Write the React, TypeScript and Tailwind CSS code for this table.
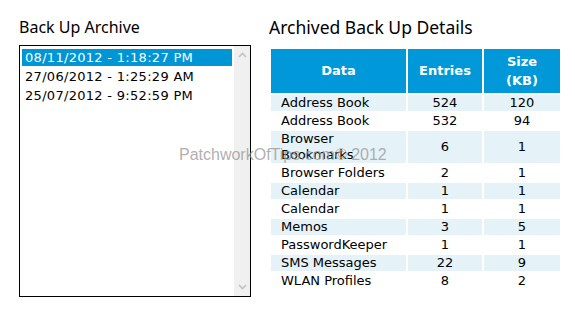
import { useState } from 'react';

const archives = [
  "08/11/2012 - 1:18:27 PM",
  "27/06/2012 - 1:25:29 AM",
  "25/07/2012 - 9:52:59 PM",
];

const details: [string, number, number][] = [
  ["Address Book", 524, 120],
  ["Address Book", 532, 94],
  ["Browser Bookmarks", 6, 1],
  ["Browser Folders", 2, 1],
  ["Calendar", 1, 1],
  ["Calendar", 1, 1],
  ["Memos", 3, 5],
  ["PasswordKeeper", 1, 1],
  ["SMS Messages", 22, 9],
  ["WLAN Profiles", 8, 2],
];

const body = { fontFamily: '"DejaVu Sans", Verdana, sans-serif' };
const heading = { fontFamily: '"Noto Sans", "Open Sans", sans-serif' };

export default function App() {
  const [selected, setSelected] = useState(0);

  return (
    <div className="relative w-[575px] h-[313px] bg-white text-black flex pt-[16px]">
      {/* Left: archive list */}
      <div className="ml-[19px] w-[232px]">
        <h2 className="text-[16px] leading-[22px] h-[29px]" style={heading}>
          Back Up Archive
        </h2>
        <div className="flex h-[252px] border border-black">
          <ul className="flex-1 pt-[3px] pl-[2px] pr-[2px] text-[13px] tracking-[0.3px]" style={body}>
            {archives.map((a, i) => (
              <li
                key={a}
                onClick={() => setSelected(i)}
                className={
                  'pl-[3px] h-[17px] leading-[17px] mb-[2px] cursor-default ' +
                  (i === selected ? 'bg-[#0096d6] text-white' : '')
                }
              >
                {a}
              </li>
            ))}
          </ul>
          <div className="w-[16px] bg-[#f0f0f0] flex flex-col items-center justify-between py-[6px]">
            <svg width="9" height="6" viewBox="0 0 9 6">
              <path d="M1 5 L4.5 1.5 L8 5" fill="none" stroke="#c2c2c2" strokeWidth="1.6" />
            </svg>
            <svg width="9" height="6" viewBox="0 0 9 6">
              <path d="M1 1 L4.5 4.5 L8 1" fill="none" stroke="#c2c2c2" strokeWidth="1.6" />
            </svg>
          </div>
        </div>
      </div>

      {/* Right: details table */}
      <div className="ml-[18px]">
        <h2 className="text-[17.5px] leading-[22px] h-[31px]" style={heading}>
          Archived Back Up Details
        </h2>
        <table className="border-separate border-spacing-[2px] text-[13px] leading-[16px]" style={body}>
          <thead>
            <tr className="bg-[#0098d8] text-white font-bold">
              <th className="w-[135px] h-[44px] px-[4px]">Data</th>
              <th className="w-[74px] px-[4px]">Entries</th>
              <th className="w-[76px] px-[8px] leading-[19px]">Size (KB)</th>
            </tr>
          </thead>
          <tbody>
            {details.map(([name, entries, size], i) => (
              <tr key={i} className={i % 2 === 0 ? 'bg-[#e5f2f8]' : ''}>
                <td className="pl-[10px] pr-[4px] w-[135px] align-middle">
                  {name === 'Browser Bookmarks' ? (
                    <>
                      Browser
                      <br />
                      Bookmarks
                    </>
                  ) : (
                    name
                  )}
                </td>
                <td className="text-center">{entries}</td>
                <td className="text-center">{size}</td>
              </tr>
            ))}
          </tbody>
        </table>
      </div>

      {/* Watermark */}
      <div
        className="absolute left-[179px] top-[145px] text-[16px] leading-[20px] text-[#9a9a9a]/80 pointer-events-none"
        style={{ fontFamily: '"Liberation Sans", Arial, sans-serif' }}
      >
        PatchworkOfTips.com© 2012
      </div>
    </div>
  );
}
